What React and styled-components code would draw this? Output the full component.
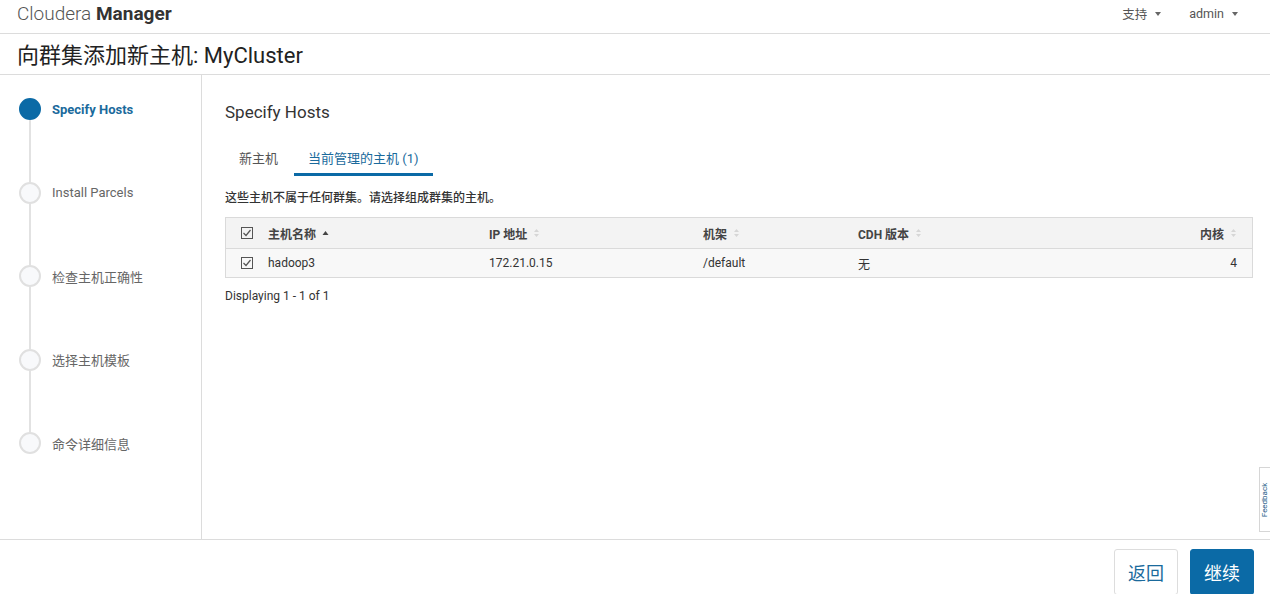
import React from 'react'
import styled, { createGlobalStyle } from 'styled-components'

const GlobalStyle = createGlobalStyle`
  html, body { margin: 0; padding: 0; background: #fff; }
  body {
    font-family: Roboto, "Noto Sans CJK SC", "Noto Sans", sans-serif;
    color: #333;
  }
  * { box-sizing: border-box; }
`

const Page = styled.div`
  width: 1270px;
  height: 594px;
  overflow: hidden;
  display: flex;
  flex-direction: column;
  position: relative;
  background: #fff;
`

const TopBar = styled.header`
  height: 34px;
  flex: none;
  display: flex;
  align-items: center;
  justify-content: space-between;
  padding: 0 32px 6px 17px;
  border-bottom: 1px solid #dcdcdc;
`

const Brand = styled.div`
  font-size: 19px;
  color: #555;
  font-weight: 300;
  b { font-weight: 700; color: #333; }
`

const Menus = styled.div`
  display: flex;
  gap: 28px;
  font-size: 12.5px;
  color: #555;
`

const MenuItem = styled.span`
  display: flex;
  align-items: center;
  gap: 8px;
  &::after {
    content: '';
    border-left: 3.5px solid transparent;
    border-right: 3.5px solid transparent;
    border-top: 4px solid #666;
  }
`

const TitleBar = styled.div`
  height: 41px;
  flex: none;
  display: flex;
  align-items: center;
  padding: 0 17px 2px;
  border-bottom: 1px solid #dcdcdc;
  font-size: 22px;
  color: #222;
`

const Body = styled.div`
  height: 465px;
  flex: none;
  display: flex;
  border-bottom: 1px solid #dcdcdc;
`

const Sidebar = styled.nav`
  width: 202px;
  flex: none;
  border-right: 1px solid #dcdcdc;
  padding: 23px 0 0 19px;
  display: grid;
  grid-auto-rows: 22px;
  row-gap: 61.5px;
  align-content: start;
`

const Step = styled.div`
  display: flex;
  align-items: center;
  gap: 11px;
  position: relative;
  font-size: 13px;
  color: ${p => (p.$active ? '#1a6a9c' : '#666')};
  font-weight: ${p => (p.$active ? 700 : 400)};
  &:not(:last-child)::before {
    content: '';
    position: absolute;
    left: 10px;
    top: 22px;
    width: 2px;
    height: 61.5px;
    background: #e2e2e2;
  }
`

const Dot = styled.span`
  width: 22px;
  height: 22px;
  border-radius: 50%;
  flex: none;
  background: ${p => (p.$active ? '#0b6aa6' : '#f8f9fb')};
  border: 2px solid ${p => (p.$active ? '#0b6aa6' : '#e0e0e0')};
`

const Content = styled.main`
  flex: 1;
  padding: 27px 17px 0 23px;
  display: flex;
  flex-direction: column;
`

const Heading = styled.h2`
  margin: 0;
  font-size: 17px;
  font-weight: 400;
  color: #333;
  line-height: 20px;
`

const Tabs = styled.div`
  display: flex;
  gap: 2px;
  margin-top: 18px;
`

const Tab = styled.div`
  padding: 8px 14px 6px;
  font-size: 13px;
  color: ${p => (p.$active ? '#1a6a9c' : '#555')};
  border-bottom: 3px solid ${p => (p.$active ? '#0b6aa6' : 'transparent')};
`

const Note = styled.p`
  margin: 14px 0 0;
  font-size: 12px;
  color: #333;
  font-weight: 500;
  line-height: 16px;
`

const Table = styled.div`
  margin-top: 11px;
  border: 1px solid #dadada;
`

const Row = styled.div`
  display: grid;
  grid-template-columns: 27px 221px 214px 155px 1fr 60px;
  align-items: center;
  height: ${p => (p.$head ? 30 : 29)}px;
  padding: 0 15px;
  font-size: 12px;
  background: ${p => (p.$head ? '#f3f3f3' : '#f8f8f8')};
  color: ${p => (p.$head ? '#444' : '#333')};
  font-weight: ${p => (p.$head ? 700 : 400)};
  & + & { border-top: 1px solid #dadada; }
`

const Cell = styled.div`
  display: flex;
  align-items: center;
  gap: 6px;
  justify-content: ${p => (p.$right ? 'flex-end' : 'flex-start')};
`

const Info = styled.div`
  margin-top: 11px;
  font-size: 12px;
  color: #333;
`

const Footer = styled.footer`
  flex: 1;
  display: flex;
  justify-content: flex-end;
  align-items: flex-start;
  gap: 12px;
  padding: 9px 16px 0 0;
`

const Button = styled.button`
  width: 64px;
  height: 46px;
  border-radius: 3px;
  font-family: inherit;
  font-size: 18px;
  cursor: pointer;
  border: 1px solid ${p => (p.$primary ? '#0b6aa6' : '#ddd')};
  background: ${p => (p.$primary ? '#0b6aa6' : '#fff')};
  color: ${p => (p.$primary ? '#fff' : '#1a6a9c')};
`

const FeedbackTab = styled.div`
  position: absolute;
  right: 0;
  top: 467px;
  width: 11px;
  height: 65px;
  border: 1px solid #d6d6d6;
  border-right: none;
  background: #fff;
  display: flex;
  align-items: center;
  justify-content: center;
  span {
    transform: rotate(-90deg);
    font-size: 8px;
    line-height: 8px;
    color: #2a5f8a;
    white-space: nowrap;
  }
`

const Check = () => (
  <svg width="12" height="12" viewBox="0 0 12 12">
    <rect x="0.5" y="0.5" width="11" height="11" fill="none" stroke="#555" />
    <path d="M2.5 6 L5 8.5 L9.5 3" fill="none" stroke="#555" strokeWidth="1.2" />
  </svg>
)

const Sort = ({ up }) =>
  up ? (
    <svg width="7" height="9" viewBox="0 0 7 9">
      <path d="M0.5 6 L3.5 2 L6.5 6 Z" fill="#444" />
    </svg>
  ) : (
    <svg width="7" height="10" viewBox="0 0 7 10">
      <path d="M1 4 L3.5 1 L6 4 Z M1 6 L3.5 9 L6 6 Z" fill="#d6d6d6" />
    </svg>
  )

const steps = ['Specify Hosts', 'Install Parcels', '检查主机正确性', '选择主机模板', '命令详细信息']

const App = () => {
  return (
    <Page>
      <GlobalStyle />
      <TopBar>
        <Brand>
          Cloudera <b>Manager</b>
        </Brand>
        <Menus>
          <MenuItem>支持</MenuItem>
          <MenuItem>admin</MenuItem>
        </Menus>
      </TopBar>
      <TitleBar>向群集添加新主机: MyCluster</TitleBar>
      <Body>
        <Sidebar>
          {steps.map((s, i) => (
            <Step key={s} $active={i === 0}>
              <Dot $active={i === 0} />
              {s}
            </Step>
          ))}
        </Sidebar>
        <Content>
          <Heading>Specify Hosts</Heading>
          <Tabs>
            <Tab>新主机</Tab>
            <Tab $active>当前管理的主机 (1)</Tab>
          </Tabs>
          <Note>这些主机不属于任何群集。请选择组成群集的主机。</Note>
          <Table>
            <Row $head>
              <Cell><Check /></Cell>
              <Cell>主机名称 <Sort up /></Cell>
              <Cell>IP 地址 <Sort /></Cell>
              <Cell>机架 <Sort /></Cell>
              <Cell>CDH 版本 <Sort /></Cell>
              <Cell $right>内核 <Sort /></Cell>
            </Row>
            <Row>
              <Cell><Check /></Cell>
              <Cell>hadoop3</Cell>
              <Cell>172.21.0.15</Cell>
              <Cell>/default</Cell>
              <Cell>无</Cell>
              <Cell $right>4</Cell>
            </Row>
          </Table>
          <Info>Displaying 1 - 1 of 1</Info>
        </Content>
      </Body>
      <Footer>
        <Button>返回</Button>
        <Button $primary>继续</Button>
      </Footer>
      <FeedbackTab>
        <span>Feedback</span>
      </FeedbackTab>
    </Page>
  )
}

export default App
